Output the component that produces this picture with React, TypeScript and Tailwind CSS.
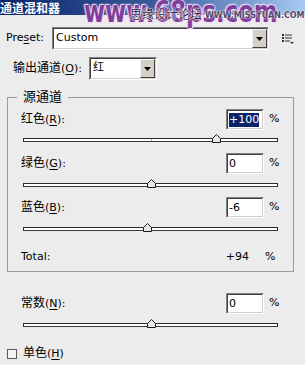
import React from "react";

const outerSunken =
  "border border-t-[#808080] border-l-[#808080] border-b-white border-r-white";
const innerSunken =
  "border border-t-[#404040] border-l-[#404040] border-b-[#d4d0c8] border-r-[#d4d0c8]";

function Dropdown({ widthClass, text }: { widthClass: string; text: string }) {
  return (
    <div className={`${widthClass} h-[23px] ${outerSunken}`}>
      <div className={`h-full flex bg-white ${innerSunken}`}>
        <div className="flex-1 flex items-center pl-[2px] text-[11px]">{text}</div>
        <div className="w-[15px] h-full bg-[#d4d0c8] border border-t-[#f4f4f4] border-l-[#f4f4f4] border-b-[#404040] border-r-[#404040] flex items-center justify-center">
          <svg width="7" height="4" viewBox="0 0 7 4">
            <path d="M0 0H7L3.5 4Z" fill="#000" />
          </svg>
        </div>
      </div>
    </div>
  );
}

function ValueBox({ value, selected }: { value: string; selected?: boolean }) {
  return (
    <div className={`w-[38px] h-[21px] ${outerSunken}`}>
      <div className={`h-full bg-white flex items-center pl-[1px] ${innerSunken}`}>
        {selected ? (
          <span className="bg-[#0a246a] text-white leading-[14px]">{value}</span>
        ) : (
          <span className="leading-[14px]">{value}</span>
        )}
      </div>
    </div>
  );
}

function ValueRow({
  label,
  mnemonic,
  value,
  selected,
  mtClass,
}: {
  label: string;
  mnemonic: string;
  value: string;
  selected?: boolean;
  mtClass: string;
}) {
  return (
    <div className={`${mtClass} h-[21px] flex items-center pl-[13px]`}>
      <div className="flex-1">
        <span className="text-[12px]">{label}</span>(
        <span className="underline underline-offset-[2px]">{mnemonic}</span>):
      </div>
      <ValueBox value={value} selected={selected} />
      <div className="w-[29px] pl-[5px]">%</div>
    </div>
  );
}

function Slider({ value, mtClass, tick }: { value: number; mtClass: string; tick?: boolean }) {
  const center = 128.5 + value * 0.65;
  return (
    <div className={`${mtClass} ml-[15px] w-[255px] h-[9px] relative pt-[4px]`}>
      <div className="h-[4px] border border-[#2a2a2a] border-b-[#3a3a3a] bg-white relative">
        {tick && <div className="absolute left-[127px] top-0 w-[1px] h-[2px] bg-[#b0b0b0]" />}
      </div>
      <svg
        className="absolute top-0"
        style={{ left: center - 4.5 }}
        width="9"
        height="10"
        viewBox="0 0 9 10"
      >
        <path d="M4.5 0.5L8.5 4.5V8.5H0.5V4.5Z" fill="#e8e8e8" stroke="#1a1a1a" strokeWidth="1" />
      </svg>
    </div>
  );
}

function MenuIcon() {
  return (
    <svg width="13" height="12" viewBox="0 0 13 12" className="ml-[13px]">
      <rect x="0" y="1" width="2" height="2" fill="#333" />
      <rect x="3" y="1.5" width="7" height="1" fill="#333" />
      <rect x="0" y="4" width="2" height="2" fill="#333" />
      <rect x="3" y="4.5" width="7" height="1" fill="#333" />
      <rect x="0" y="7" width="2" height="2" fill="#333" />
      <rect x="3" y="7.5" width="5" height="1" fill="#333" />
      <path d="M8 9H12L10 11Z" fill="#333" />
    </svg>
  );
}

export default function App() {
  return (
    <div className="w-[305px] h-[365px] bg-[#ececec] overflow-hidden relative text-[11px] text-black font-['DejaVu_Sans','Noto_Sans_CJK_SC',sans-serif]">
      {/* Title bar */}
      <div className="h-[15px] bg-gradient-to-r from-[#0a246a] via-[#3a5a9c] to-[#a6caf0] flex items-center">
        <span className="text-white font-bold text-[12px] leading-none font-['Noto_Sans_CJK_SC',sans-serif]">
          通道混和器
        </span>
      </div>

      {/* Watermark overlay */}
      <div className="absolute left-[84px] top-[0px] origin-left scale-x-[0.76] text-[30px] leading-[24px] font-bold text-[#7e3f9b] font-['DejaVu_Sans',sans-serif] whitespace-nowrap [text-shadow:0_0_2px_#fbe8fb,0_0_2px_#fbe8fb,0_0_3px_#f0d0f0,1px_1px_1px_#f5dcf5,-1px_-1px_1px_#f5dcf5]">
        www.68ps.com
      </div>
      <div className="absolute left-[130px] top-[8px] text-[12px] leading-none text-[#3a2440] font-['Noto_Sans_CJK_SC',sans-serif] whitespace-nowrap [text-shadow:0_0_2px_#fff,0_0_2px_#fff,0_0_1px_#fff]">
        思缘设计论坛
      </div>
      <div className="absolute left-[205px] top-[12px] text-[8px] leading-none font-bold text-[#54456a] font-['DejaVu_Sans',sans-serif] whitespace-nowrap [text-shadow:0_0_2px_#fff,0_0_1px_#fff]">
        WWW.MISSYUAN.COM
      </div>

      {/* Preset row */}
      <div className="mt-[12px] h-[23px] flex items-center pl-[6px]">
        <div className="w-[46px]">
          Pre<span className="underline underline-offset-[2px]">s</span>et:
        </div>
        <Dropdown widthClass="w-[217px]" text="Custom" />
        <MenuIcon />
      </div>

      {/* Output channel row */}
      <div className="mt-[7px] h-[23px] flex items-center pl-[13px]">
        <div className="w-[76px]">
          <span className="text-[12px]">输出通道</span>(
          <span className="underline underline-offset-[2px]">O</span>):
        </div>
        <Dropdown widthClass="w-[68px]" text="红" />
      </div>

      {/* Source channels group */}
      <fieldset className="mt-[10px] ml-[7px] w-[287px] border border-[#9c9c9c] pb-[3px]">
        <legend className="ml-[9px] px-[6px] text-[13px] leading-[14px]">源通道</legend>
        <ValueRow label="红色" mnemonic="R" value="+100" selected mtClass="mt-[5px]" />
        <Slider value={100} mtClass="mt-[4px]" tick />
        <ValueRow label="绿色" mnemonic="G" value="0" mtClass="mt-[10px]" />
        <Slider value={0} mtClass="mt-[5px]" />
        <ValueRow label="蓝色" mnemonic="B" value="-6" mtClass="mt-[9px]" />
        <Slider value={-6} mtClass="mt-[5px]" />
        <div className="mt-[15px] h-[21px] flex items-center pl-[13px]">
          <div className="flex-1">Total:</div>
          <div>+94</div>
          <div className="w-[44px] pl-[16px]">%</div>
        </div>
      </fieldset>

      {/* Constant */}
      <div className="ml-[7px] w-[287px] px-[1px]">
        <ValueRow label="常数" mnemonic="N" value="0" mtClass="mt-[21px]" />
        <Slider value={0} mtClass="mt-[5px]" />
      </div>

      {/* Monochrome checkbox */}
      <div className="mt-[19px] h-[13px] flex items-center pl-[7px]">
        <div className="w-[10px] h-[10px] border border-[#5a5a5a] bg-[#f4f4f4]" />
        <div className="ml-[6px]">
          <span className="text-[12px]">单色</span>(
          <span className="underline underline-offset-[2px]">H</span>)
        </div>
      </div>
    </div>
  );
}
